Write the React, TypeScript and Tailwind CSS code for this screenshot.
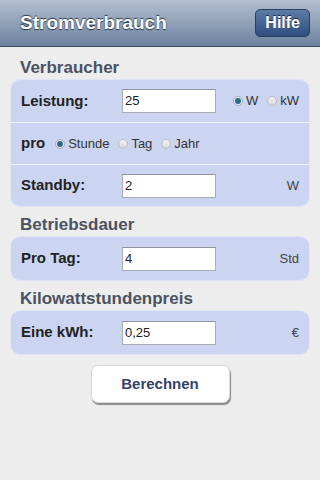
import React from "react";

const FONT = { fontFamily: '"Liberation Sans", Arial, sans-serif' };

function Radio({ checked, label }: { checked?: boolean; label: string }) {
  return (
    <span className="flex items-center gap-[3px]">
      <span
        className={
          "w-[10px] h-[10px] rounded-full border flex items-center justify-center " +
          (checked
            ? "border-[#9fb0c4] bg-[#e8eef4]"
            : "border-[#b8bcc4] bg-gradient-to-b from-[#f4f4f4] to-[#d6d6d6]")
        }
      >
        {checked && <span className="w-[6px] h-[6px] rounded-full bg-[#2d6c86]" />}
      </span>
      <span className="text-[13px] text-[#333]">{label}</span>
    </span>
  );
}

function Field({ value }: { value: string }) {
  return (
    <div className="w-[94px] h-[24px] bg-white border border-[#a9adb5] border-t-[#8f939b] flex items-center pl-[2px] text-[13px] text-[#222]">
      {value}
    </div>
  );
}

function Row({
  label,
  value,
  unit,
  first,
  tall,
}: {
  label: string;
  value: string;
  unit: React.ReactNode;
  first?: boolean;
  tall?: boolean;
}) {
  return (
    <div
      className={
        "flex items-center pl-[10px] pr-[10px] " +
        (tall ? "h-[43px] " : "h-[42px] ") +
        (first ? "" : "border-t border-[#f1f4fc]")
      }
    >
      <span className="w-[101px] text-[15px] font-bold text-[#222]">{label}</span>
      <Field value={value} />
      <div className="flex-1 flex justify-end">{unit}</div>
    </div>
  );
}

function Heading({ children }: { children: string }) {
  return (
    <div className="px-[20px] pt-[8px] pb-[2px] leading-[21px] text-[17px] font-bold text-[#4b5262]">
      {children}
    </div>
  );
}

function Card({ children }: { children: React.ReactNode }) {
  return (
    <div className="mx-[11px] rounded-[9px] bg-[#cbd5f1] shadow-[0_0_0_1px_#dfe5f7] overflow-hidden">
      {children}
    </div>
  );
}

export default function App() {
  return (
    <div className="w-[320px] h-[480px] bg-[#ededed] overflow-hidden" style={FONT}>
      <header className="h-[47px] flex items-center justify-between pl-[20px] pr-[10px] bg-gradient-to-b from-[#b5c0d0] to-[#6c829f] border-b border-[#3d4859]">
        <h1 className="text-[19px] font-bold text-white [text-shadow:0_-1px_1px_#2b3545,0_1px_1px_#2b3545]">
          Stromverbrauch
        </h1>
        <button className="h-[28px] px-[9px] rounded-[5px] border border-[#2c3f5f] bg-gradient-to-b from-[#5e7ba6] to-[#2f4f7f] text-[16px] font-bold text-white [text-shadow:0_-1px_0_#1c2b44]">
          Hilfe
        </button>
      </header>

      <div className="pt-[2px]">
        <Heading>Verbraucher</Heading>
        <Card>
          <Row
            first
            label="Leistung:"
            value="25"
            unit={
              <div className="flex items-center gap-[9px]">
                <Radio checked label="W" />
                <Radio label="kW" />
              </div>
            }
          />
          <div className="h-[42px] flex items-center gap-[9px] pl-[10px] border-t border-[#f1f4fc]">
            <span className="text-[15px] font-bold text-[#222] mr-[1px]">pro</span>
            <Radio checked label="Stunde" />
            <Radio label="Tag" />
            <Radio label="Jahr" />
          </div>
          <Row
            label="Standby:"
            value="2"
            unit={<span className="text-[13px] text-[#444]">W</span>}
          />
        </Card>

        <Heading>Betriebsdauer</Heading>
        <Card>
          <Row
            first
            tall
            label="Pro Tag:"
            value="4"
            unit={<span className="text-[13px] text-[#444]">Std</span>}
          />
        </Card>

        <Heading>Kilowattstundenpreis</Heading>
        <Card>
          <Row
            first
            tall
            label="Eine kWh:"
            value="0,25"
            unit={<span className="text-[13px] text-[#444]">€</span>}
          />
        </Card>

        <div className="flex justify-center pt-[11px]">
          <button className="w-[139px] h-[38px] rounded-[7px] bg-white border border-[#d8d8d8] shadow-[1px_2px_1px_#8a8a8a] text-[15px] font-bold text-[#33426a]">
            Berechnen
          </button>
        </div>
      </div>
    </div>
  );
}
